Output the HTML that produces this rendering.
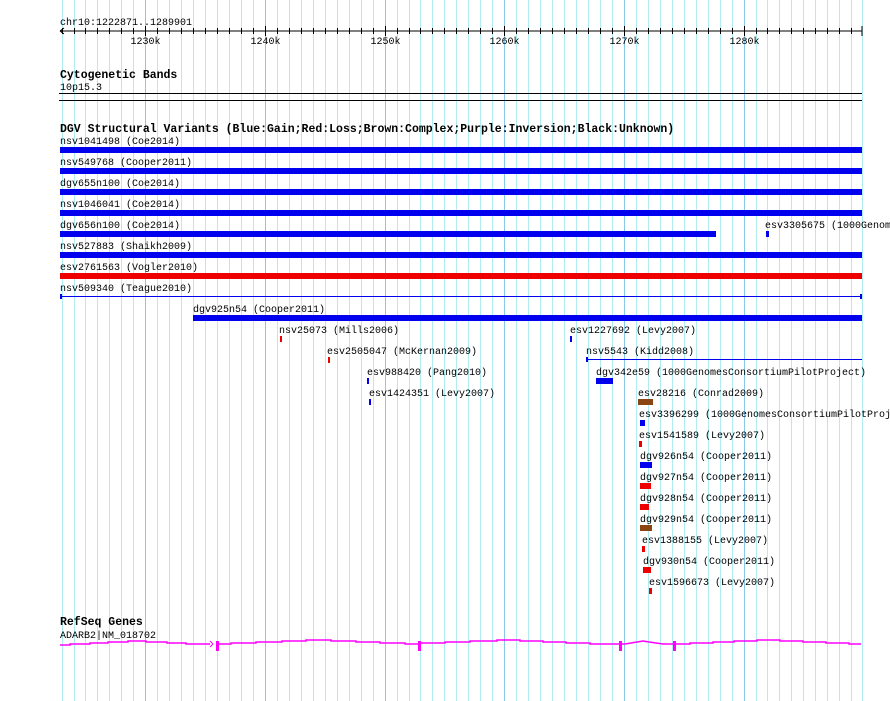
<!DOCTYPE html>
<html><head><meta charset="utf-8"><style>
html,body{margin:0;padding:0;background:#fff;width:890px;height:701px;overflow:hidden}
svg text{font-family:"Liberation Mono",monospace;font-size:10px;fill:#000}
svg text.b{font-weight:bold;font-size:11.5px}
</style></head><body>
<svg id="s" width="890" height="701" xmlns="http://www.w3.org/2000/svg">
<g id="grid"></g>
<text x="60" y="25">chr10:1222871..1289901</text>
<line x1="60" y1="31" x2="862" y2="31" stroke="#000"/>
<path d="M60 31 l4 -3 M60 31 l4 3" stroke="#000" fill="none"/>
<g id="ticks"></g>
<text class="b" x="60" y="78">Cytogenetic Bands</text>
<text x="60" y="90">10p15.3</text>
<rect x="59" y="93" width="803" height="1" fill="#000"/>
<rect x="59" y="100" width="803" height="1" fill="#000"/>
<text class="b" x="60" y="132">DGV Structural Variants (Blue:Gain;Red:Loss;Brown:Complex;Purple:Inversion;Black:Unknown)</text>
<g id="rows"></g>
<text class="b" x="60" y="625">RefSeq Genes</text>
<text x="60" y="638">ADARB2|NM_018702</text>
<polyline fill="none" stroke="#f0f" stroke-width="1.5" points="60,645 70,645 70,644 90,644 90,643 108,643 108,642 128,642 128,641 146,641 146,642 167,642 167,643 186,643 186,644 210,644 M"/>
<polyline fill="none" stroke="#f0f" stroke-width="1.5" points="218,644 231,644 231,643 256,643 256,642 282,642 282,641 306,641 306,640 331,640 331,641 356,641 356,642 380,642 380,643 405,643 405,644 420,644 420,643 445,643 445,642 470,642 470,641 497,641 497,640 520,640 520,641 543,641 543,642 566,642 566,643 590,643 590,644 620,644 625,644 631,643 637,642 643,641 649,642 656,643 663,644 674,644 690,644 690,643 713,643 713,642 734,642 734,641 757,641 757,640 780,640 780,641 803,641 803,642 826,642 826,643 849,643 849,644 861,644"/>
<path d="M213 644 l-3 -3 M213 644 l-3 3" stroke="#f0f" fill="none"/>
<rect x="216" y="641" width="3" height="10" fill="#f0f"/>
<rect x="418" y="641" width="3" height="10" fill="#f0f"/>
<rect x="619" y="641" width="3" height="10" fill="#f0f"/>
<rect x="673" y="641" width="3" height="10" fill="#f0f"/>
</svg>
<script>
var NS="http://www.w3.org/2000/svg";
function el(p,t,a,txt){var e=document.createElementNS(NS,t);for(var k in a)e.setAttribute(k,a[k]);if(txt)e.textContent=txt;p.appendChild(e);return e;}
var g=document.getElementById('grid'),tk=document.getElementById('ticks');
function X(bp){return 60+(bp-1222871)*802/67030;}
for(var b=1223000;b<=1289000;b+=1000){var x=Math.round(X(b))+0.5;var maj=b%10000==0;
el(g,'line',{x1:x,y1:0,x2:x,y2:701,stroke:maj?'#88c8e8':'#b0ecf0'});
el(tk,'line',{x1:x,y1:maj?26:28,x2:x,y2:maj?36:34,stroke:'#000'});
if(maj)el(tk,'text',{x:x,y:44,'text-anchor':'middle'},(b/1000)+'k');}
el(g,'line',{x1:862.5,y1:0,x2:862.5,y2:701,stroke:'#b0ecf0'});
el(tk,'line',{x1:862,y1:26,x2:862,y2:36,stroke:'#000'});
var B='#0000ee',R='#ee0000',N='#8b4513';
var rows=[
[60,140,'nsv1041498 (Coe2014)',60,862,B],
[60,161,'nsv549768 (Cooper2011)',60,862,B],
[60,182,'dgv655n100 (Coe2014)',60,862,B],
[60,203,'nsv1046041 (Coe2014)',60,862,B],
[60,224,'dgv656n100 (Coe2014)',60,716,B],
[765,224,'esv3305675 (1000GenomesConsortiumPilotProject)',766,769,B],
[60,245,'nsv527883 (Shaikh2009)',60,862,B],
[60,266,'esv2761563 (Vogler2010)',60,862,R],
[60,287,'nsv509340 (Teague2010)',60,862,B,1],
[193,308,'dgv925n54 (Cooper2011)',193,862,B],
[279,329,'nsv25073 (Mills2006)',280,282,R],
[570,329,'esv1227692 (Levy2007)',570,572,B],
[327,350,'esv2505047 (McKernan2009)',328,330,R],
[586,350,'nsv5543 (Kidd2008)',586,862,B,1],
[367,371,'esv988420 (Pang2010)',367,369,B],
[596,371,'dgv342e59 (1000GenomesConsortiumPilotProject)',596,613,B],
[369,392,'esv1424351 (Levy2007)',369,371,B],
[638,392,'esv28216 (Conrad2009)',638,653,N],
[639,413,'esv3396299 (1000GenomesConsortiumPilotProject)',640,645,B],
[639,434,'esv1541589 (Levy2007)',639,642,R],
[640,455,'dgv926n54 (Cooper2011)',640,652,B],
[640,476,'dgv927n54 (Cooper2011)',640,651,R],
[640,497,'dgv928n54 (Cooper2011)',640,649,R],
[640,518,'dgv929n54 (Cooper2011)',640,652,N],
[642,539,'esv1388155 (Levy2007)',642,645,R],
[643,560,'dgv930n54 (Cooper2011)',643,651,R],
[649,581,'esv1596673 (Levy2007)',649,652,R]];
var r=document.getElementById('rows');
rows.forEach(function(a){el(r,'text',{x:a[0],y:a[1]+4},a[2]);var y=a[1]+7;
if(a[6]){el(r,'rect',{x:a[3],y:y+2,width:a[4]-a[3],height:1,fill:a[5]});el(r,'rect',{x:a[3],y:y,width:2,height:5,fill:a[5]});if(a[4]==862&&a[3]==60)el(r,'rect',{x:860,y:y,width:2,height:5,fill:a[5]});}
else el(r,'rect',{x:a[3],y:y,width:a[4]-a[3],height:6,fill:a[5]});});
</script>
</body></html>
